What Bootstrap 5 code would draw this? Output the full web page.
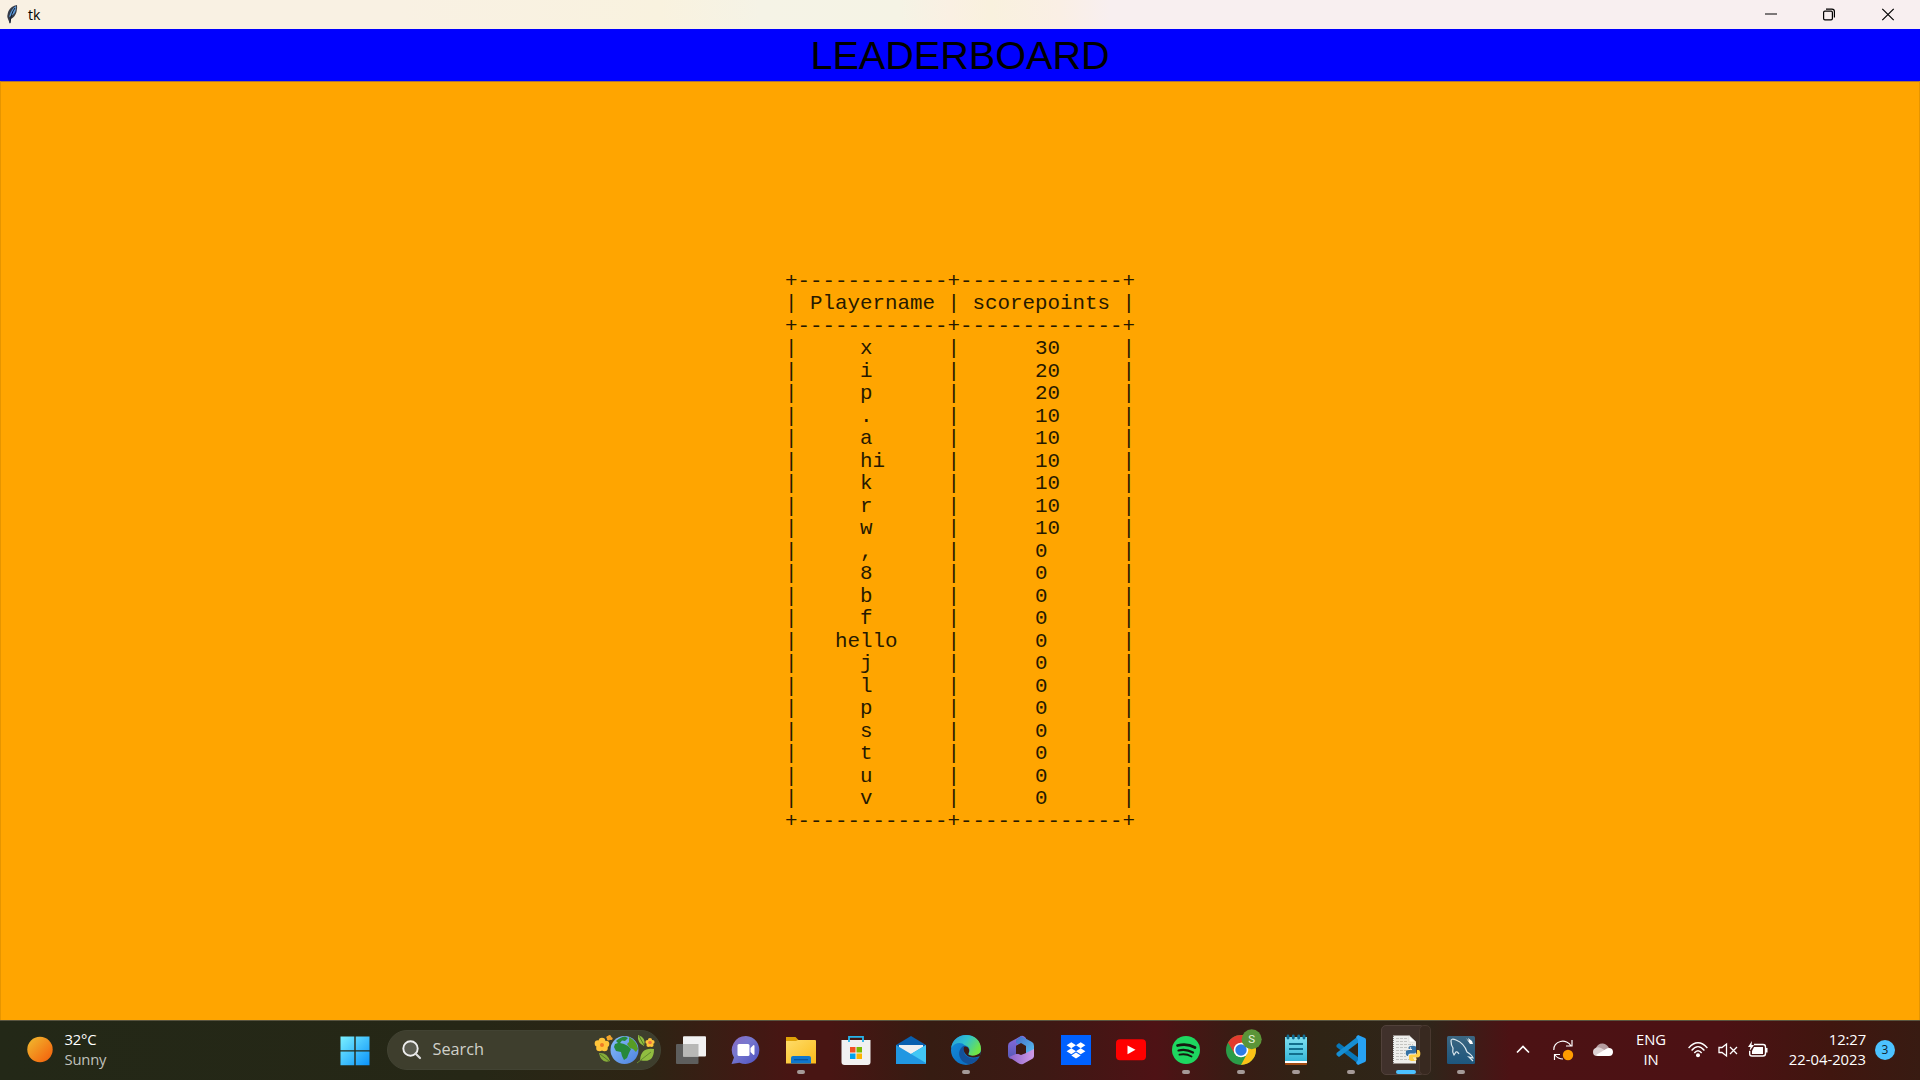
<!DOCTYPE html>
<html lang="en">
<head>
<meta charset="utf-8">
<title>tk</title>
<link href="https://cdn.jsdelivr.net/npm/bootstrap@5.3.0/dist/css/bootstrap.min.css" rel="stylesheet">
<style>
body{width:1920px;height:1080px;font-family:"Open Sans","Noto Sans",sans-serif;background:#ffa500}
svg{display:block;flex:none;overflow:visible}
.titlebar{height:29px;background:linear-gradient(90deg,#f9f1e3 0,#f9f1e3 400px,#f9f2df 660px,#f5f3e6 760px,#f5f3e5 900px,#faf0e3 950px,#f9f1de 990px,#faefe5 1060px,#f8eff0 1110px,#f8eff0 100%);color:#000}
.win-name{font-size:14px;line-height:29px;margin-left:10px}
.win-controls{padding-right:3px}
.win-btn{width:58.5px;height:29px}
.heading{height:52px;background:#00f;color:#000;font:39.6px/52px "Liberation Sans",Arial,sans-serif}
.board{border:1px solid #e69500;border-top-color:#a87440;border-bottom:0;padding-top:2px}
.board pre{font:20.83px/22.49px "Liberation Mono","Courier New",monospace;color:#261900;overflow:visible}
.taskbar{height:60px;border-top:1px solid #5a5540;padding-bottom:2px;background:linear-gradient(90deg,#232817 0,#262716 480px,#2e2414 650px,#481513 790px,#481513 830px,#361c12 930px,#3d1914 1040px,#4e1215 1155px,#391c14 1235px,#2f2415 1320px,#30251a 1430px,#4c1214 1510px,#4c1114 1720px,#40160f 1830px,#381b12 1920px)}
.weather{width:327px;padding-left:27px}
.small-text{font-size:14.8px;line-height:20px;letter-spacing:-.1px;padding-bottom:2px}
.weather .small-text{letter-spacing:-.2px}
.dim{color:#c0c1bd}
.cell{width:55px;height:57px;position:relative}
.search-box{width:274px;height:40px;background:#3e3e2d;border:1px solid #424333;margin-left:4.5px;margin-right:3px;padding-left:14px;padding-right:5px;color:#d0d0c9;font-size:16.3px}
.run::after{content:"";position:absolute;left:23.5px;bottom:4px;width:8px;height:4px;border-radius:2px;background:#a59a98}
.active-app::before{content:"";position:absolute;left:2.5px;top:4px;width:44px;height:50px;border-radius:5px;background:#40312b;border:1px solid #51413a}
.active-app .stack-edge{position:absolute;left:40px;top:4px;width:12px;height:50px;border:1px solid #49382f;border-radius:5px;background:#382920}
.active-app::after{left:17.5px;width:20px;background:#4cc2ff}
.active-app svg{position:relative}
.tray{color:#fff;padding-right:25px}
.tray-icon{width:40px}
.stat-icon{width:30px}
.count{width:20px;height:20px;border-radius:50%;background:#4cc2ff;color:#102430;font-size:12px;line-height:20px;margin-left:9px}
</style>
<script src="https://cdn.jsdelivr.net/npm/bootstrap@5.3.0/dist/js/bootstrap.bundle.min.js"></script>
</head>
<body class="m-0 overflow-hidden d-flex flex-column">
<header class="titlebar d-flex align-items-center flex-shrink-0">
  <svg width="11" height="20" viewBox="0 0 11 20" style="margin-left:7px"><path d="M10 0Q4 1 1.500 6Q-.5 11 1 14L3 19L4 14Q8 12 9.500 7Q10.500 3 10 0Z" fill="#353b48"/><path d="M9 1Q4 4 2 12Q7 10 8.500 6Q9.500 3 9 1Z" fill="#5d9bdc"/><path d="M8 3Q4 8 3 18" stroke="#111a28" fill="none"/></svg>
  <span class="win-name">tk</span>
  <div class="win-controls ms-auto d-flex">
    <div class="win-btn d-flex align-items-center justify-content-center"><svg width="12" height="12"><path d="M0 5H12" stroke="#000"/></svg></div>
    <div class="win-btn d-flex align-items-center justify-content-center"><svg width="12" height="12" fill="none" stroke="#000" stroke-width="1.200"><rect x=".6" y="2.100" width="8.800" height="8.800" rx="1.300"/><path d="M3 .2H9Q11.400 .2 11.400 2.600V8.500"/></svg></div>
    <div class="win-btn d-flex align-items-center justify-content-center"><svg width="12" height="12"><path d="M.3 -.2L11.700 11.200M11.700 -.2L.3 11.200" stroke="#000" stroke-width="1.200"/></svg></div>
  </div>
</header>
<h1 class="heading text-center m-0 flex-shrink-0">LEADERBOARD</h1>
<main class="board flex-grow-1 d-flex align-items-center justify-content-center">
<pre class="m-0">+------------+-------------+
| Playername | scorepoints |
+------------+-------------+
|     x      |      30     |
|     i      |      20     |
|     p      |      20     |
|     .      |      10     |
|     a      |      10     |
|     hi     |      10     |
|     k      |      10     |
|     r      |      10     |
|     w      |      10     |
|     ,      |      0      |
|     8      |      0      |
|     b      |      0      |
|     f      |      0      |
|   hello    |      0      |
|     j      |      0      |
|     l      |      0      |
|     p      |      0      |
|     s      |      0      |
|     t      |      0      |
|     u      |      0      |
|     v      |      0      |
+------------+-------------+</pre>
</main>
<footer class="taskbar d-flex align-items-center flex-shrink-0">
  <svg width="0" height="0" class="position-absolute"><defs>
    <linearGradient id="sun" x2="1" y2="1"><stop stop-color="#f0bd30"/><stop offset=".75" stop-color="#f47313"/><stop offset="1" stop-color="#e96010"/></linearGradient>
    <linearGradient id="win" gradientUnits="userSpaceOnUse" x1="-14" y1="-14" x2="15" y2="15"><stop stop-color="#7af0ff"/><stop offset="1" stop-color="#0a92fa"/></linearGradient>
    <linearGradient id="chat" x1="0" y1="0" x2="1" y2="1"><stop stop-color="#8a67c0"/><stop offset=".4" stop-color="#7778cf"/><stop offset="1" stop-color="#4d50c0"/></linearGradient>
    <linearGradient id="fold" x2="1" y2="1"><stop stop-color="#ffdc69"/><stop offset="1" stop-color="#fabb1a"/></linearGradient>
    <linearGradient id="edgeTop" x2="1" y2=".5"><stop stop-color="#2897dd"/><stop offset=".5" stop-color="#2fc2cf"/><stop offset="1" stop-color="#70e346"/></linearGradient>
    <linearGradient id="edgeLow" x2="1" y2="1"><stop stop-color="#1490df"/><stop offset="1" stop-color="#0963b8"/></linearGradient>
    <linearGradient id="sea" x2="1" y2="1"><stop stop-color="#87bdfb"/><stop offset="1" stop-color="#4e82df"/></linearGradient>
    <linearGradient id="page" x2="0" y2="1"><stop stop-color="#80e0f0"/><stop offset="1" stop-color="#36b7d9"/></linearGradient>
    <linearGradient id="dolphin" x2="0" y2="1"><stop stop-color="#3c6681"/><stop offset="1" stop-color="#1d567d"/></linearGradient>
    <linearGradient id="m1" x2="1" y2="1"><stop stop-color="#4669ca"/><stop offset="1" stop-color="#57c9f5"/></linearGradient>
    <linearGradient id="m2" x2="0" y2="1"><stop stop-color="#8c6ce0"/><stop offset="1" stop-color="#5359b5"/></linearGradient>
    <linearGradient id="m3" x2="1" y2="0"><stop stop-color="#8c63c9"/><stop offset="1" stop-color="#cf9be8"/></linearGradient>
  </defs></svg>

  <div class="weather d-flex align-items-center">
    <svg width="26" height="26" viewBox="0 0 26 26"><circle cx="13" cy="12.500" r="12.700" fill="url(#sun)"/></svg>
    <div class="small-text text-white" style="margin-left:11.500px"><div>32°C</div><div class="dim">Sunny</div></div>
  </div>
  <div class="cell d-flex align-items-center justify-content-center"><svg width="40" height="40" viewBox="-20 -20 40 40"><path d="M-14.500-13.500H-.7V.2H-14.500ZM.7-13.500H14.500V.2H.7ZM-14.500 1.500H-.7V15.300H-14.500ZM.7 1.500H14.500V15.300H.7Z" fill="url(#win)"/></svg></div>
  <div class="search-box rounded-pill d-flex align-items-center">
    <svg width="20" height="20" viewBox="0 0 20 20"><circle cx="8.500" cy="8.500" r="7.200" fill="#5b5c50" stroke="#eee" stroke-width="1.900"/><path d="M13.500 13.500L18 18" stroke="#ddd" stroke-width="2.200" stroke-linecap="round"/></svg>
    <span style="margin-left:11px">Search</span>
    <svg class="ms-auto" width="60" height="32" viewBox="0 0 60 32">
      <g fill="#ffc43a"><circle cx="7" cy="7" r="3.300"/><circle cx="11" cy="10" r="3.300"/><circle cx="9.500" cy="14" r="3.300"/><circle cx="4.500" cy="14" r="3.300"/><circle cx="3" cy="9.500" r="3.300"/><circle cx="7" cy="11" r="3.500"/></g><circle cx="7" cy="11" r="2" fill="#ef7a24"/>
      <g fill="#f3a42b"><circle cx="14.500" cy="2.500" r="1.600"/><circle cx="16" cy="4.500" r="1.600"/><circle cx="13.500" cy="5" r="1.600"/><circle cx="12.800" cy="3.500" r="1.400"/></g>
      <path d="M4 19Q12 18 15 27Q6 30 4 19Z" fill="#86ac39"/><path d="M5 20L14 27" stroke="#55772a"/>
      <circle cx="29.500" cy="16" r="14" fill="url(#sea)"/>
      <path d="M21 7Q25 3 30 2.500L33 4L30 7L27 6.500L25 9L29 10L33 12L36 15L34 19L32 24L29 26L27 22L26 18L21 17L19 13L20 10L23 9Z" fill="#27883a"/><path d="M34 3Q42 7 43 15L41 18L38 15L35 14L32 10L34 8Z" fill="#589d24"/>
      <path d="M43 1Q52 4 49 12Q42 9 43 1Z" fill="#91bd40"/><path d="M44 2L49 11" stroke="#527926"/>
      <g fill="#ffc43a"><circle cx="55" cy="6" r="2.100"/><circle cx="57.500" cy="8" r="2.100"/><circle cx="56.500" cy="11" r="2.100"/><circle cx="53.500" cy="11" r="2.100"/><circle cx="52.500" cy="8" r="2.100"/></g><circle cx="55" cy="8.500" r="1.800" fill="#ec7445"/>
      <path d="M59 15Q46 13 45 26Q59 30 59 15Z" fill="#91bd40"/><path d="M56 18L42 29" stroke="#668b30"/>
    </svg>
  </div>

  <div class="cell d-flex align-items-center justify-content-center"><svg width="40" height="40" viewBox="-20 -20 40 40"><rect x="-15" y="-6" width="22.500" height="20" rx="1" fill="#5e5e5d"/><rect x="-8" y="-13.700" width="23" height="20.300" rx="1" fill="#f2f2f2"/><path d="M-8-6H7.500V6.600H-8Z" fill="#b8b8b6"/></svg></div>
  <div class="cell d-flex align-items-center justify-content-center"><svg width="40" height="40" viewBox="-20 -20 40 40"><path d="M0-14A14 14 0 1 1-6.500 12.700L-14.500 14L-12 7.500A14 14 0 0 1 0-14Z" fill="url(#chat)"/><rect x="-8.500" y="-6" width="12" height="12" rx="1.500" fill="#fff"/><path d="M4.500-2L7.500-5Q8.500-5 8.500-4V4Q8.500 5 7.500 5L4.500 2Z" fill="#fff"/></svg></div>
  <div class="cell run d-flex align-items-center justify-content-center"><svg width="40" height="40" viewBox="-20 -20 40 40"><path d="M-15-13H-5.500L-2.500-10V-5H-15Z" fill="#dfa107"/><path d="M-15-9H-5L-3-10H14Q15-10 15-9V13.500H-15Z" fill="url(#fold)"/><path d="M-10 13.500V8Q-10 6 -8 6H8Q10 6 10 8V13.500Z" fill="#0f77cd"/><path d="M-7 9.700H7" stroke="#07529b" stroke-width="1.200"/></svg></div>
  <div class="cell d-flex align-items-center justify-content-center"><svg width="40" height="40" viewBox="-20 -20 40 40"><path d="M-7-8V-13.200H7V-8" fill="none" stroke="#26b5ec" stroke-width="1.800"/><path d="M-14.500-10H14.500V12Q14.500 15 11.500 15H-11.500Q-14.500 15-14.500 12Z" fill="#f1f1f1"/><path d="M-7-10V-8M7-10V-8" stroke="#26b5ec" stroke-width="1.800"/><path d="M-6-3H-.5V2.500H-6Z" fill="#f15022"/><path d="M.5-3H6V2.500H.5Z" fill="#7cb900"/><path d="M-6 3.500H-.5V9H-6Z" fill="#00a2ed"/><path d="M.5 3.500H6V9H.5Z" fill="#fcb400"/></svg></div>
  <div class="cell d-flex align-items-center justify-content-center"><svg width="40" height="40" viewBox="-20 -20 40 40"><path d="M-15-5L0-14L15-5V0H-15Z" fill="#0960af"/><path d="M-12-5H12V3L0 9L-12 3Z" fill="#f0f0f0"/><path d="M-15-5L0 4L15-5V14H-15Z" fill="#2197e2"/><path d="M15-5L0 4L15 13Z" fill="#42c7f5"/></svg></div>
  <div class="cell run d-flex align-items-center justify-content-center"><svg width="40" height="40" viewBox="-20 -20 40 40"><circle r="15" fill="url(#edgeLow)"/><path d="M-14.800-2C-14-10-7-15 0-15C9-15 15-9 15-1C15 4 11 6 7 6C4 6 2 5 2.500 3.500C5 0 3-4-1-4.500C-5-9-12-7-14.800-2Z" fill="url(#edgeTop)"/><path d="M-4-3C-11 4-4 15 5 14Q10 12 13 7C6 11-4 6-2-1C-1-3 0-4 0-4Q-2-5-4-3Z" fill="#13519a"/><path d="M-2-3C-4 4 4 10 12.500 6.500Q14 6 13.500 7L15 2Q11 6 6 5.800Q1 5 2.500 3.500C5-2 0-5-2-3Z" fill="#3d1914"/></svg></div>
  <div class="cell d-flex align-items-center justify-content-center"><svg width="40" height="40" viewBox="-20 -20 40 40"><path d="M0-14L-11-8Q-13-7-13-4V5Q-13 8-10 9L-5 6V-4L5-9V-12Q2-15 0-14Z" fill="url(#m2)"/><path d="M0-14L11-8Q13-7 13-4V7L5 3V-3L-5-7V-10Z" fill="url(#m1)"/><path d="M-12 7L-5 4L5 3L13-1V5Q13 8 11 9L2 14Q0 15-3 13Z" fill="url(#m3)"/><path d="M-5-4L0-7L5-4V3L0 5L-5 3Z" fill="#3d1a15"/></svg></div>
  <div class="cell d-flex align-items-center justify-content-center"><svg width="40" height="40" viewBox="-20 -20 40 40"><path d="M-15-15H15V15H-15Z" fill="#0061ff"/><path d="M-4.700-7.700L0-4.700L-4.700-1.700L-9.400-4.700ZM4.700-7.700L9.400-4.700L4.700-1.700L0-4.700ZM-4.700-1.700L0 1.300L-4.700 4.300L-9.400 1.300ZM4.700-1.700L9.400 1.300L4.700 4.300L0 1.300ZM0 2.400L4.700 5.400L0 8.400L-4.700 5.400Z" fill="#fff"/></svg></div>
  <div class="cell d-flex align-items-center justify-content-center"><svg width="40" height="40" viewBox="-20 -20 40 40"><rect x="-15" y="-10.700" width="30" height="21" rx="4" fill="#f00"/><path d="M-3.500-4.500L4.500-.2L-3.500 4.200Z" fill="#fff"/></svg></div>
  <div class="cell run d-flex align-items-center justify-content-center"><svg width="40" height="40" viewBox="-20 -20 40 40"><circle r="14" fill="#1ed760"/><g fill="none" stroke="#15180f" stroke-linecap="round"><path d="M-8.500-4.500Q1-7 9-2.500" stroke-width="2.700"/><path d="M-7.500 .5Q0-1.500 7 2.500" stroke-width="2.200"/><path d="M-6.500 4.700Q0 3.300 5.500 6.500" stroke-width="1.800"/></g></svg></div>
  <div class="cell run d-flex align-items-center justify-content-center"><svg width="40" height="40" viewBox="-20 -20 40 40"><circle r="15" fill="#2b9c48"/><path d="M0-15A15 15 0 0 1 15 0A15 15 0 0 1 0 15L7 2L0-7Z" fill="#fbc116"/><path d="M-13-7.500A15 15 0 0 1 13-7.500H0L-6.500 3.500Z" fill="#e33b2e"/><circle r="7.300" fill="#fff"/><circle r="5.700" fill="#2c7be5"/><circle cx="10.700" cy="-10.700" r="10" fill="#5b9438"/><text x="10.700" y="-6.600" text-anchor="middle" font-size="11.500" font-family="Roboto,sans-serif" fill="#e8f5df">S</text></svg></div>
  <div class="cell run d-flex align-items-center justify-content-center"><svg width="40" height="40" viewBox="-20 -20 40 40"><path d="M-11 9H11V14Q11 15 10 15H-10Q-11 15-11 14Z" fill="#a34b12"/><path d="M-11-12H11V13H-11Z" fill="#fff"/><path d="M-11-13H11V11H-11Z" fill="url(#page)"/><path d="M-8-14V-12M-2.700-14V-12M2.700-14V-12M8-14V-12" stroke="#126e94" stroke-width="2.800" stroke-linecap="round"/><path d="M-7-6H7M-7-1H7M-7 4H7" stroke="#126f8d" stroke-width="1.800"/></svg></div>
  <div class="cell run d-flex align-items-center justify-content-center"><svg width="40" height="40" viewBox="-20 -20 40 40"><path d="M-14.500-5L-12-7L8 8V14.500L-14.500-3Z" fill="#0877b9"/><path d="M-14.500 5L-12 7L8-8V-14.500L-14.500 3Z" fill="#168ed3"/><path d="M7-15L14-12Q15-11.500 15-10V10Q15 11.500 14 12L7 15L5 13L7 10V-10L5-13Z" fill="#27a2f4"/></svg></div>
  <div class="cell run active-app d-flex align-items-center justify-content-center"><span class="stack-edge"></span><svg width="40" height="40" viewBox="-20 -20 40 40" style="z-index:1"><path d="M-13-14.500H3L10-8V13.500H-13Z" fill="#eeeeec"/><path d="M3-14.500V-8H10Z" fill="#fff" stroke="#c8c8c5" stroke-width=".5"/><path d="M-10-11.500H1M-10-8.500H1M-10-5.500H7M-10-2.500H7M-10 .5H1M-10 3.500H-1M-10 6.500H0M-10 9.500H6" stroke="#c4c4c1" stroke-dasharray="3 1"/><path d="M-12.500-14V13" stroke="#777" stroke-dasharray="1 1"/><path d="M3-3.500Q7-5 10-3.500V2Q10 3.500 8 3.500H4Q2 3.500 2 6H1Q-1 4 0 1Q1 0 3 0H6V-1H2.500Z" fill="#3471a4"/><path d="M11 0H13Q15 2 14 6Q13 7.500 11 7.500H7V8.500H11Q11 11 7 11Q3 11 3 9V6Q3 4.500 5 4.500H9Q11 4.500 11 2Z" fill="#ffd046"/><circle cx="4.500" cy="-2" r=".8" fill="#fff"/><circle cx="9" cy="9.300" r=".8" fill="#fff"/></svg></div>
  <div class="cell run d-flex align-items-center justify-content-center"><svg width="40" height="40" viewBox="-20 -20 40 40"><rect x="-14" y="-14" width="28" height="28" rx="1.500" fill="url(#dolphin)"/><path d="M-10-9Q-10-12-5-10Q3-7 6 2Q11 5 12 8L8 7L12 11M-10-9Q-10-5-8-2Q-9 2-7 5L-5 2Q-4 1-2 4" fill="none" stroke="#dce9ef" stroke-width="1.200"/><path d="M5-12L8-9L7-12L11-9L12-6L9-6Z" fill="#fff"/></svg></div>

  <div class="tray ms-auto d-flex align-items-center">
    <div class="tray-icon d-flex justify-content-center"><svg width="14" height="9" viewBox="0 0 14 9"><path d="M1 7.500L7 1.500L13 7.500" fill="none" stroke="#fff" stroke-width="1.700"/></svg></div>
    <div class="tray-icon d-flex justify-content-center"><svg width="20" height="20" viewBox="0 0 20 20"><path d="M.8 10A9 8 0 0 1 18 6M19 0V6H13M1.500 20V14.500H7M2 15Q5 19 10 19" fill="none" stroke="#fff" stroke-width="1.200"/><circle cx="15" cy="15" r="5.200" fill="#ff9c00"/></svg></div>
    <div class="tray-icon d-flex justify-content-center"><svg width="20" height="14" viewBox="0 0 20 14"><path d="M3 5Q5 0 10 .5Q14 1 16 5L19 7L13 10L2 8Z" fill="#b59da0"/><path d="M1 6Q4 3 8 5L15 9L7 13H4Q0 13 0 9Q0 7 1 6Z" fill="#ddd2d3"/><path d="M3 12L13 6Q16 4 19 6Q21 9 19 12Q18 13 16 13H5Z" fill="#fff"/></svg></div>
    <div class="small-text text-center" style="width:56px"><div>ENG</div><div>IN</div></div>
    <div class="stat-icon ms-1 d-flex justify-content-center"><svg width="20" height="16" viewBox="0 0 20 16"><g fill="none" stroke="#fff" stroke-width="1.400"><path d="M.6 6Q10-4.500 19.400 6M3.600 8.500Q10 .8 16.400 8.500M6.300 11Q10 6.500 13.700 11"/></g><circle cx="10" cy="13.200" r="2" fill="#fff"/></svg></div>
    <div class="stat-icon d-flex justify-content-center"><svg width="20" height="14" viewBox="0 0 20 14"><path d="M1 4.500H4L8.500 1V13L4 9.500H1Z" fill="none" stroke="#fff" stroke-width="1.300"/><path d="M12 4L19 11M19 4L12 11" stroke="#fff" stroke-width="1.300"/></svg></div>
    <div class="stat-icon d-flex justify-content-center"><svg width="20" height="16" viewBox="0 0 20 16"><path d="M6 2.500H15Q17.500 2.500 17.500 5V11.500Q17.500 14 15 14H4Q1.700 14 1.700 12V9" fill="none" stroke="#fff" stroke-width="1.400"/><path d="M6 5H15V12H4V9ZM18 6H19.500V10.500H18ZM4-1L0 5H2.500L1.500 9L6 3H3.500Z" fill="#fff"/></svg></div>
    <div class="small-text text-end" style="width:93px"><div>12:27</div><div style="letter-spacing:0">22-04-2023</div></div>
    <div class="count text-center">3</div>
  </div>
</footer>
</body>
</html>
